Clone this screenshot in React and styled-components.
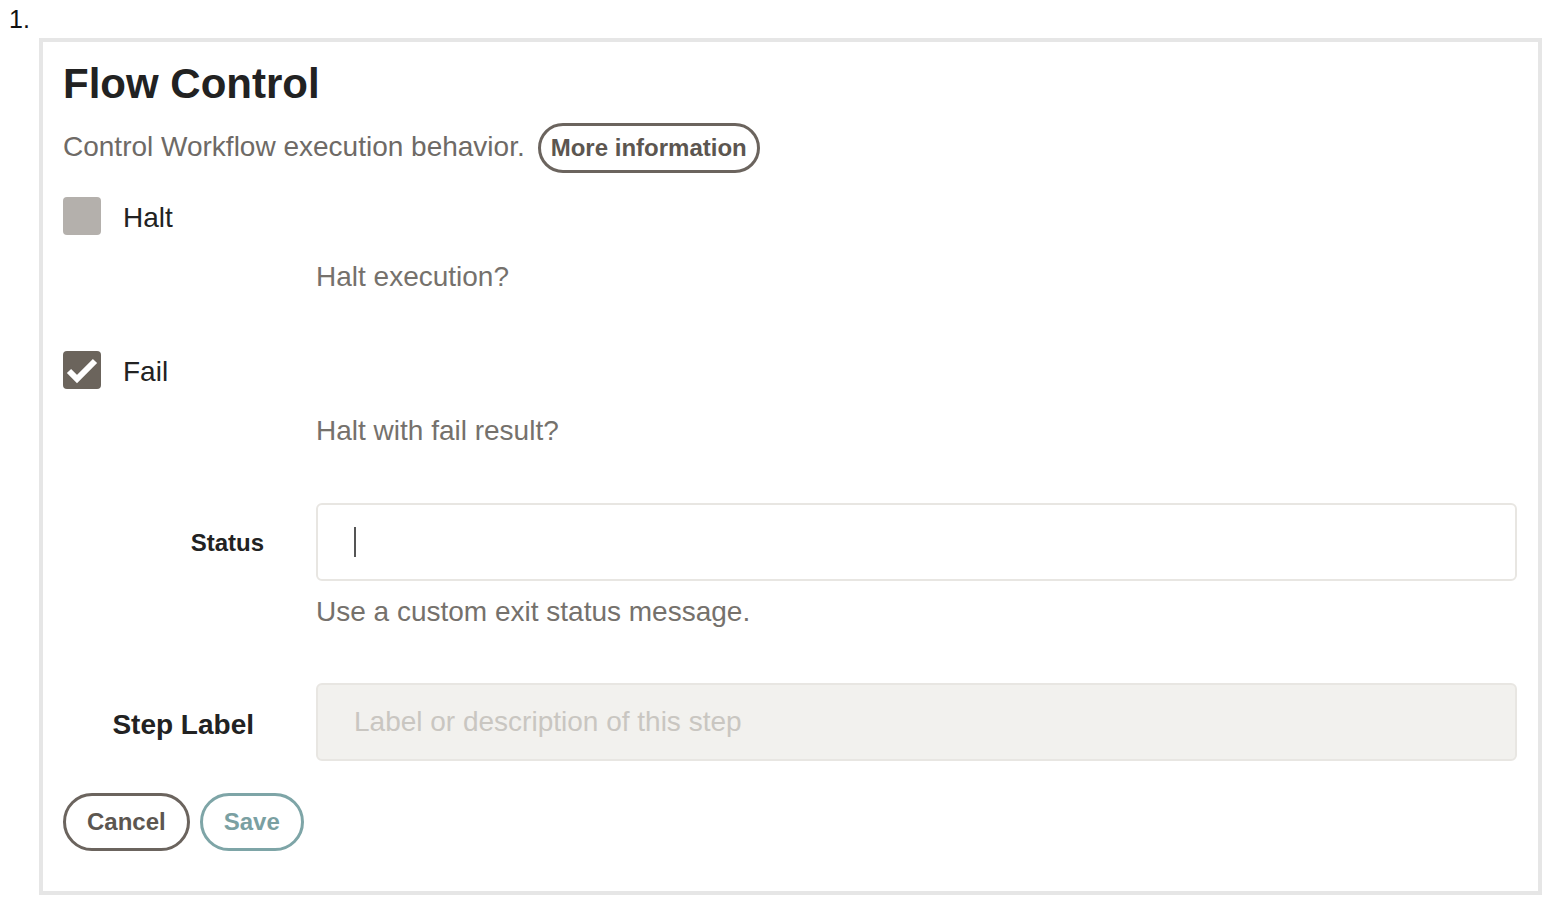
import React from "react";
import styled, { createGlobalStyle } from "styled-components";

const Global = createGlobalStyle`
  html, body { margin: 0; padding: 0; background: #ffffff; }
  body { font-family: "Liberation Sans", Arial, Helvetica, sans-serif; }
  * { box-sizing: border-box; }
`;

const Page = styled.div`
  padding: 4px 18px 12px 9px;
`;

const Marker = styled.div`
  font-size: 25px;
  line-height: 30px;
  color: #111;
`;

const Card = styled.section`
  margin: 4px 0 0 30px;
  border: 4px solid #e6e6e6;
  padding: 18px 21px 40px 20px;
`;

const Title = styled.h1`
  margin: 0 0 15px;
  font-size: 42px;
  line-height: 48px;
  font-weight: 700;
  color: #222;
`;

const IntroRow = styled.div`
  display: flex;
  align-items: baseline;
  gap: 13px;
`;

const Lead = styled.span`
  font-size: 28px;
  line-height: 32px;
  color: #6e6a66;
`;

const PillButton = styled.button`
  font-family: inherit;
  font-weight: 700;
  font-size: 24px;
  line-height: 28px;
  padding: ${(p) => (p.$size === "sm" ? "8px 10px" : "12px 21px")};
  border-radius: 30px;
  background: #fff;
  border: 3px solid ${(p) => (p.$tone === "teal" ? "#7ea5a7" : "#6b645e")};
  color: ${(p) => (p.$tone === "teal" ? "#7aa0a2" : "#5c5650")};
  cursor: pointer;
`;

const CheckRow = styled.div`
  display: flex;
  align-items: center;
  gap: 22px;
  margin-top: ${(p) => p.$top}px;
`;

const Box = styled.span`
  width: 38px;
  height: 38px;
  border-radius: 4px;
  background: ${(p) => (p.$checked ? "#6b645c" : "#b4b0ac")};
  display: inline-flex;
  align-items: center;
  justify-content: center;
`;

const CheckLabel = styled.span`
  font-size: 28px;
  line-height: 32px;
  padding-top: 3px;
  color: #222;
`;

const Help = styled.div`
  margin: ${(p) => p.$top}px 0 0 253px;
  font-size: 28px;
  line-height: 32px;
  color: #75716c;
`;

const FieldRow = styled.div`
  display: grid;
  grid-template-columns: 253px 1fr;
  align-items: center;
  margin-top: ${(p) => p.$top}px;
`;

const FieldLabel = styled.label`
  text-align: right;
  padding-right: ${(p) => p.$inset}px;
  padding-top: ${(p) => p.$shift}px;
  font-weight: 700;
  font-size: ${(p) => p.$size}px;
  color: #222;
`;

const TextBox = styled.div`
  height: 78px;
  border: 2px solid #e8e6e2;
  border-radius: 6px;
  background: #fff;
  padding-left: 36px;
  display: flex;
  align-items: center;
`;

const Caret = styled.span`
  width: 2px;
  height: 30px;
  background: #555;
`;

const MutedInput = styled.input`
  height: 78px;
  width: 100%;
  border: 2px solid #e8e6e2;
  border-radius: 6px;
  background: #f2f1ee;
  padding: 0 0 0 36px;
  font-family: inherit;
  font-size: 28px;
  color: #444;
  outline: none;
  &::placeholder { color: #c9c6c1; }
`;

const Actions = styled.div`
  display: flex;
  gap: 10px;
  margin-top: 32px;
`;

function Check({ checked }) {
  return (
    <Box $checked={checked}>
      {checked && (
        <svg width="38" height="38" viewBox="0 0 38 38">
          <polyline
            points="6,20 14,28 32,10"
            fill="none"
            stroke="#fff"
            strokeWidth="6"
            strokeLinejoin="miter"
          />
        </svg>
      )}
    </Box>
  );
}

export default function App() {
  return (
    <>
      <Global />
      <Page>
        <Marker>1.</Marker>
        <Card>
          <Title>Flow Control</Title>
          <IntroRow>
            <Lead>Control Workflow execution behavior.</Lead>
            <PillButton $size="sm">More information</PillButton>
          </IntroRow>

          <CheckRow $top={24}>
            <Check />
            <CheckLabel>Halt</CheckLabel>
          </CheckRow>
          <Help $top={26}>Halt execution?</Help>

          <CheckRow $top={58}>
            <Check checked />
            <CheckLabel>Fail</CheckLabel>
          </CheckRow>
          <Help $top={26}>Halt with fail result?</Help>

          <FieldRow $top={56}>
            <FieldLabel $inset={52} $size={24} $shift={2}>Status</FieldLabel>
            <TextBox>
              <Caret />
            </TextBox>
          </FieldRow>
          <Help $top={15}>Use a custom exit status message.</Help>

          <FieldRow $top={55}>
            <FieldLabel $inset={62} $size={28} $shift={6}>Step Label</FieldLabel>
            <MutedInput placeholder="Label or description of this step" readOnly />
          </FieldRow>

          <Actions>
            <PillButton>Cancel</PillButton>
            <PillButton $tone="teal">Save</PillButton>
          </Actions>
        </Card>
      </Page>
    </>
  );
}
